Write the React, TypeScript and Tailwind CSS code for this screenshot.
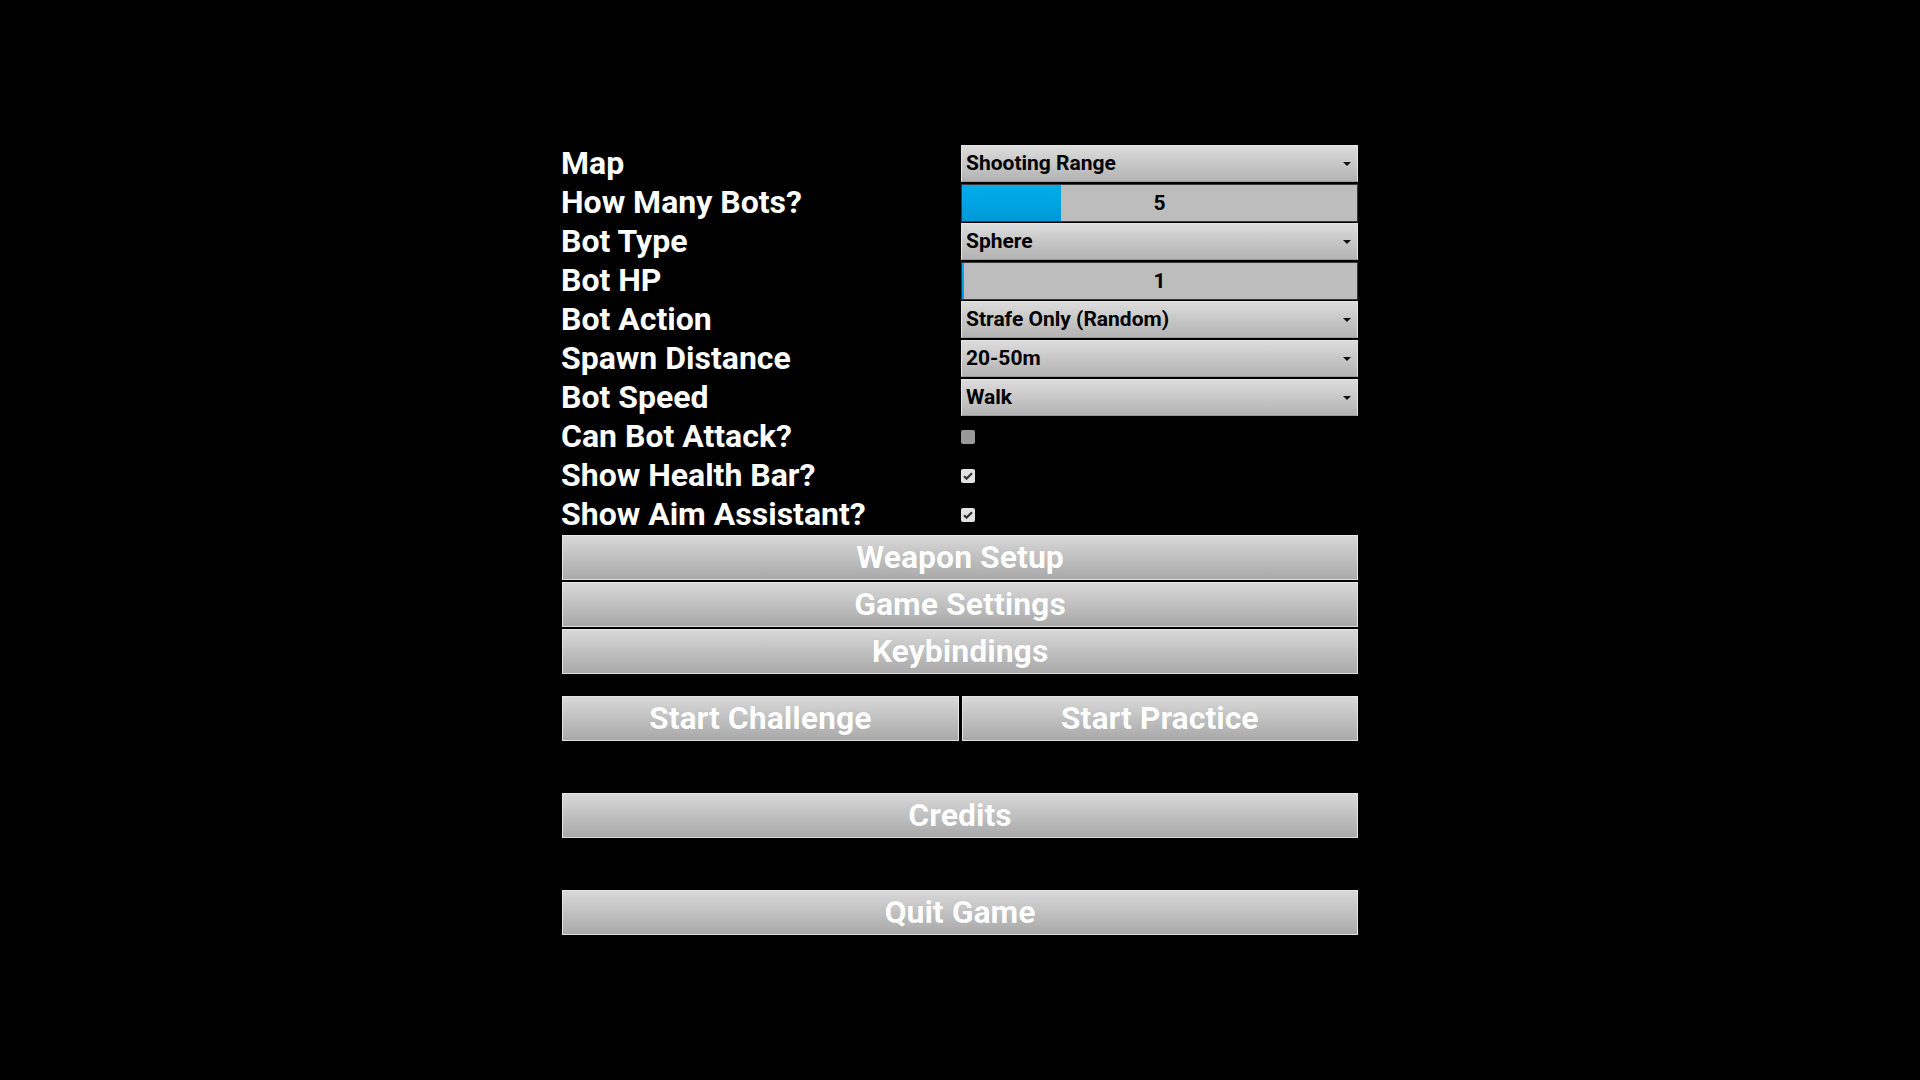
import React from 'react';

type Row =
  | { label: string; kind: 'select'; value: string }
  | { label: string; kind: 'slider'; value: number; fill: number }
  | { label: string; kind: 'check'; checked: boolean };

const ROWS: Row[] = [
  { label: 'Map', kind: 'select', value: 'Shooting Range' },
  { label: 'How Many Bots?', kind: 'slider', value: 5, fill: 25 },
  { label: 'Bot Type', kind: 'select', value: 'Sphere' },
  { label: 'Bot HP', kind: 'slider', value: 1, fill: 0.5 },
  { label: 'Bot Action', kind: 'select', value: 'Strafe Only (Random)' },
  { label: 'Spawn Distance', kind: 'select', value: '20-50m' },
  { label: 'Bot Speed', kind: 'select', value: 'Walk' },
  { label: 'Can Bot Attack?', kind: 'check', checked: false },
  { label: 'Show Health Bar?', kind: 'check', checked: true },
  { label: 'Show Aim Assistant?', kind: 'check', checked: true },
];

const Select: React.FC<{ value: string }> = ({ value }) => (
  <div className="flex h-[37px] items-center justify-between border border-[#e4e4e4] border-b-[#9a9a9a] bg-gradient-to-b from-[#dcdcdc] to-[#b3b3b3] pl-[4px] pr-[6px]">
    <span className="text-[21px] font-bold leading-none text-black">{value}</span>
    <svg width="8" height="4" viewBox="0 0 8 4" className="mt-[1px]">
      <path d="M0 0H8L4 4Z" fill="#111" />
    </svg>
  </div>
);

const Slider: React.FC<{ value: number; fill: number }> = ({ value, fill }) => (
  <div className="relative flex h-[38px] items-center justify-center border border-[#3a3a3a] bg-[#bdbdbd]">
    <div
      className="absolute left-0 top-0 h-full bg-gradient-to-b from-[#00aeea] to-[#0098d8]"
      style={{ width: fill < 1 ? '2px' : `${fill}%` }}
    />
    <span className="relative text-[21px] font-bold leading-none text-black">{value}</span>
  </div>
);

const Check: React.FC<{ checked: boolean }> = ({ checked }) =>
  checked ? (
    <div className="flex h-[14px] w-[14px] items-center justify-center rounded-[2px] bg-[#e2e2e2]">
      <svg width="10" height="8" viewBox="0 0 10 8">
        <path d="M1 4.2L3.6 6.6L9 1.2" stroke="#333" strokeWidth="2.2" fill="none" />
      </svg>
    </div>
  ) : (
    <div className="h-[14px] w-[14px] rounded-[2px] bg-[#999999]" />
  );

const Button: React.FC<{ children: React.ReactNode; className?: string }> = ({ children, className }) => (
  <div
    className={`flex h-[45px] items-center justify-center border border-[#e6e6e6] border-b-[#dcdcdc] bg-gradient-to-b from-[#d8d8d8] to-[#a9a9a9] pb-[2px] text-[32px] font-bold leading-none text-white [text-shadow:0_0_1px_rgba(0,0,0,0.15)] ${className ?? ''}`}
  >
    {children}
  </div>
);

export default function App() {
  return (
    <div className="min-h-screen w-full bg-black font-[Roboto,sans-serif]">
      <div className="mx-auto w-[796px] pt-[145px]">
        <div className="flex flex-col gap-[2px]">
          {ROWS.map((row) => (
            <div key={row.label} className="grid h-[37px] grid-cols-[399px_397px] items-center">
              <span className="-ml-[1px] pb-[2px] text-[32px] font-bold leading-none text-white">{row.label}</span>
              {row.kind === 'select' && <Select value={row.value} />}
              {row.kind === 'slider' && <Slider value={row.value} fill={row.fill} />}
              {row.kind === 'check' && <Check checked={row.checked} />}
            </div>
          ))}
        </div>

        <div className="mt-[2px] flex flex-col gap-[2px]">
          <Button>Weapon Setup</Button>
          <Button>Game Settings</Button>
          <Button>Keybindings</Button>
        </div>

        <div className="mt-[22px] grid grid-cols-2 gap-[3px]">
          <Button>Start Challenge</Button>
          <Button>Start Practice</Button>
        </div>

        <Button className="mt-[52px]">Credits</Button>
        <Button className="mt-[52px]">Quit Game</Button>
      </div>
    </div>
  );
}
